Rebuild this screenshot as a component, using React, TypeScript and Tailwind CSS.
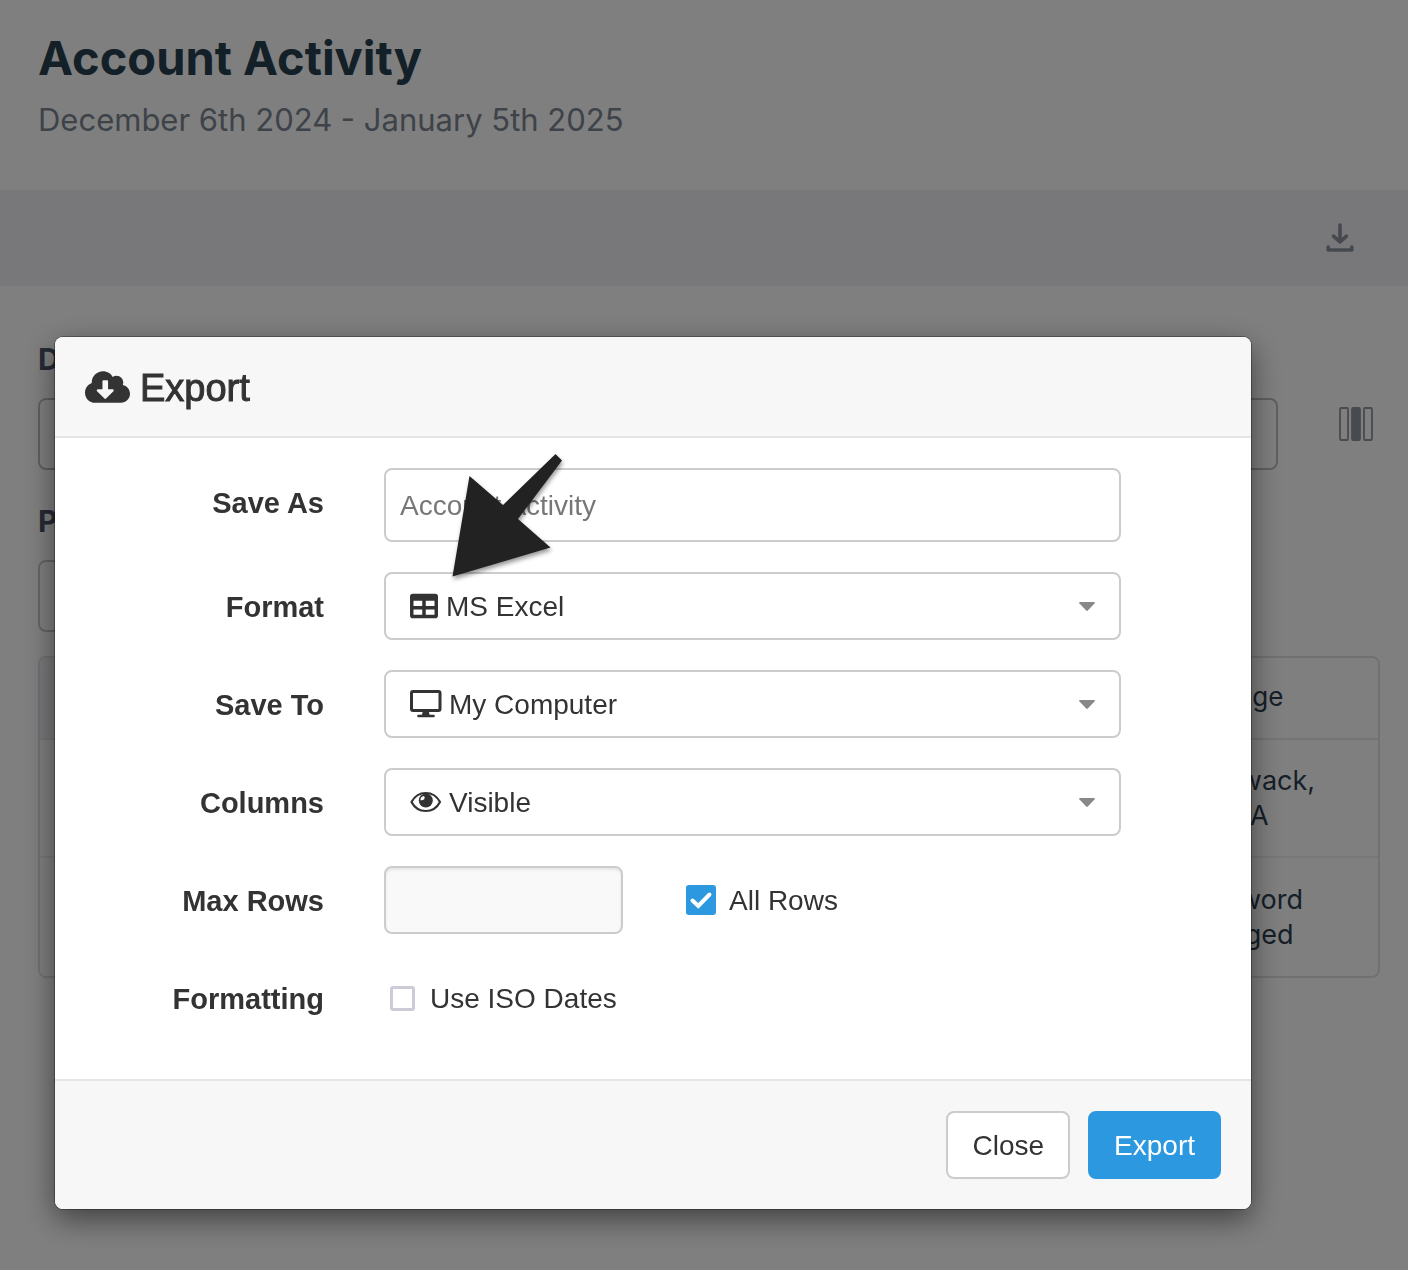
import { useState, type ReactNode } from "react";
import { FaCloudDownloadAlt, FaTable } from "react-icons/fa";

function DesktopIcon() {
  return (
    <svg viewBox="0 0 32 28" className="h-7 w-8" fill="none" stroke="currentColor" aria-hidden="true">
      <rect x="1.500" y="1.500" width="28.500" height="19" rx="1.500" strokeWidth="3" />
      <path d="M12.800 21h6l.8 4h-7.600z" fill="currentColor" stroke="none" />
      <path d="M8.500 26h15" strokeWidth="2.600" strokeLinecap="round" />
    </svg>
  );
}

function EyeIcon() {
  return (
    <svg viewBox="0 0 32 22" className="h-[22px] w-8" fill="none" aria-hidden="true">
      <path
        d="M1.500 11C4.500 5.300 9.700 2 15.800 2s11.200 3.300 14.200 9c-3 5.700-8.100 9-14.200 9S4.500 16.700 1.500 11z"
        stroke="currentColor"
        strokeWidth="2.200"
        strokeLinejoin="round"
      />
      <circle cx="15.800" cy="9.500" r="7" fill="currentColor" />
      <path d="M10.400 9.200a4.200 4.200 0 0 1 3.600-4.200q1.400 1.800.2 3.300-1.300 1.400-3.800.9z" fill="white" />
    </svg>
  );
}

function DownloadIcon() {
  return (
    <svg
      viewBox="0 0 28 30"
      className="h-[30px] w-7"
      fill="none"
      stroke="currentColor"
      strokeWidth="3.600"
      strokeLinecap="round"
      strokeLinejoin="round"
      aria-hidden="true"
    >
      <path d="M14 2V18M7.500 13.200l6.500 5.600 6.500-5.600" />
      <path d="M2.200 24v3h23.600v-3" />
    </svg>
  );
}

function ColumnsIcon() {
  return (
    <svg viewBox="0 0 34 34" className="size-[34px]" stroke="currentColor" strokeWidth="1.800" aria-hidden="true">
      <rect x="1" y="1" width="8" height="32" rx="1" fill="none" />
      <rect x="13" y="1" width="8" height="32" rx="1" fill="currentColor" />
      <rect x="25" y="1" width="8" height="32" rx="1" fill="none" />
    </svg>
  );
}

function Row({ label, htmlFor, children }: { label: string; htmlFor: string; children: ReactNode }) {
  return (
    <div className="grid grid-cols-12">
      <label
        htmlFor={htmlFor}
        className="col-span-3 flex h-[68px] items-center justify-end px-[30px] pt-0.5 text-[29px] font-bold"
      >
        {label}
      </label>
      {children}
    </div>
  );
}

function SelectRow({
  label,
  id,
  icon,
  options,
  indent,
}: {
  label: string;
  id: string;
  icon: ReactNode;
  options: string[];
  indent: string;
}) {
  return (
    <Row label={label} htmlFor={id}>
      <div className="col-span-8 px-[30px]">
        <div className="relative">
          <select
            id={id}
            className={`h-[68px] w-full appearance-none rounded-lg border-2 border-[#cccccc] bg-white pt-0.5 pr-16 ${indent}`}
          >
            {options.map((o) => (
              <option key={o}>{o}</option>
            ))}
          </select>
          <span className="pointer-events-none absolute inset-y-0 left-[26px] flex items-center">{icon}</span>
          <svg
            viewBox="0 0 16 9"
            className="pointer-events-none absolute top-[30px] right-[26px] h-[9px] w-4"
            fill="#888888"
            aria-hidden="true"
          >
            <path d="M1 0h14q1.500.400.500 1.500L8.800 8.600q-.800.700-1.600 0L.500 1.500Q-.500.400 1 0z" />
          </svg>
        </div>
      </div>
    </Row>
  );
}

function ReportPage() {
  return (
    <main className="min-h-screen bg-white font-['Inter',sans-serif] text-[#2c3e50]">
      <header className="h-[190px] px-[38px] pt-7">
        <h1 className="text-[47px] leading-[60px] font-bold text-[#28404f]">Account Activity</h1>
        <p className="mt-3 text-[31px] leading-[40px] text-[#7d8592]">December 6th 2024 - January 5th 2025</p>
      </header>
      <div className="flex h-24 items-center justify-end bg-[#f1f1f6] pr-[54px] text-[#8b929e]">
        <button type="button" aria-label="Download">
          <DownloadIcon />
        </button>
      </div>
      <section className="px-[38px] pt-[52px] text-[28px] leading-[35px]">
        <div className="flex items-start">
          <div className="flex-1">
            <label htmlFor="dates" className="block h-[60px] pt-1 text-[30px] font-bold text-[#4c5568]">
              Day
            </label>
            <input id="dates" className="block h-[72px] w-full rounded-lg border-2 border-[#bcbfc4] px-4" />
          </div>
          <button type="button" aria-label="Choose columns" className="mt-[69px] mr-[-3px] ml-[61px] text-[#8e96a0]">
            <ColumnsIcon />
          </button>
        </div>
        <label htmlFor="page" className="mt-[30px] block h-[60px] pt-1 text-[30px] font-bold text-[#4c5568]">
          Page
        </label>
        <input id="page" className="block h-[72px] w-1/2 rounded-lg border-2 border-[#c8cace] px-4" />
        <div className="mt-6 mr-[-10px] rounded-lg border-2 border-[#e2e2e4]">
          <table className="w-full table-fixed text-left">
            <colgroup>
              <col />
              <col className="w-[222px]" />
            </colgroup>
            <thead>
              <tr className="h-[81px] border-b-2 border-[#e8e8ec] text-[26px]">
                <th className="rounded-tl-lg bg-[#f1f1f6]" aria-label="Date" />
                <th className="pb-1 pl-8 font-normal">Change</th>
              </tr>
            </thead>
            <tbody className="text-[27px]">
              <tr className="h-[118px] border-b-2 border-[#eeeeee]">
                <td />
                <td className="pl-[22px]">
                  Chilliwack,
                  <br />
                  BC, CA
                </td>
              </tr>
              <tr className="h-[119px]">
                <td />
                <td className="pl-[22px]">
                  Password
                  <br />
                  Changed
                </td>
              </tr>
            </tbody>
          </table>
        </div>
      </section>
    </main>
  );
}

function ExportDialog() {
  const [allRows, setAllRows] = useState(true);
  const [isoDates, setIsoDates] = useState(false);

  return (
    <div
      role="dialog"
      aria-labelledby="export-title"
      className="relative rounded-lg bg-white font-['Liberation_Sans',Arial,sans-serif] text-[28px] leading-[40px] text-[#333333] shadow-[0_0_0_1px_rgba(0,0,0,0.300),0_10px_30px_rgba(0,0,0,0.500)]"
    >
      <div className="flex h-[101px] items-center gap-[10px] rounded-t-lg border-b-2 border-[#e5e5e5] bg-[#f7f7f7] px-[30px]">
        <FaCloudDownloadAlt className="h-9 w-[45px]" preserveAspectRatio="none" />
        <h2 id="export-title" className="pt-0.5 text-[38px] leading-[40px] [-webkit-text-stroke:1px_#333333]">
          Export
        </h2>
      </div>

      <form className="flex flex-col gap-[30px] pt-[30px] pb-[47px]">
        <Row label="Save As" htmlFor="save-as">
          <div className="col-span-8 px-[30px]">
            <input
              id="save-as"
              placeholder="Account Activity"
              className="block h-[74px] w-full rounded-lg border-2 border-[#cccccc] px-[14px] pt-0.5 placeholder:text-[#777777]"
            />
          </div>
        </Row>
        <SelectRow
          label="Format"
          id="format"
          icon={<FaTable className="size-7" />}
          options={["MS Excel", "CSV"]}
          indent="pl-[60px]"
        />
        <SelectRow
          label="Save To"
          id="save-to"
          icon={<DesktopIcon />}
          options={["My Computer"]}
          indent="pl-[63px]"
        />
        <SelectRow
          label="Columns"
          id="columns"
          icon={<EyeIcon />}
          options={["Visible", "All"]}
          indent="pl-[63px]"
        />
        <Row label="Max Rows" htmlFor="max-rows">
          <div className="col-span-3 px-[30px]">
            <input
              id="max-rows"
              disabled={allRows}
              className="block h-[68px] w-full rounded-lg border-2 border-[#cccccc] bg-[#f9f9f9] px-[14px] shadow-[inset_0_2px_3px_rgba(0,0,0,0.080)]"
            />
          </div>
          <label className="col-span-5 flex h-[68px] items-center gap-[13px] pl-[33px]">
            <span className="relative size-[30px]">
              <input
                type="checkbox"
                checked={allRows}
                onChange={(e) => setAllRows(e.target.checked)}
                className="block size-[30px] appearance-none rounded-[3px] border-[3px] border-[#ccccd8] bg-white checked:border-[#2b98e0] checked:bg-[#2b98e0]"
              />
              {allRows && (
                <svg
                  viewBox="0 0 30 30"
                  className="pointer-events-none absolute inset-0 size-[30px]"
                  fill="none"
                  stroke="white"
                  strokeWidth="4"
                  strokeLinecap="round"
                  aria-hidden="true"
                >
                  <path d="M6.500 15.500l5.800 5.500L23.500 9.500" />
                </svg>
              )}
            </span>
            <span className="pt-0.5">All Rows</span>
          </label>
        </Row>
        <Row label="Formatting" htmlFor="iso-dates">
          <div className="col-span-8 flex h-[68px] items-center gap-[15px] pl-9">
            <input
              id="iso-dates"
              type="checkbox"
              checked={isoDates}
              onChange={(e) => setIsoDates(e.target.checked)}
              className="size-[25px] appearance-none rounded-[3px] border-[3px] border-[#ccccd8] bg-white checked:border-[#2b98e0] checked:bg-[#2b98e0]"
            />
            <label htmlFor="iso-dates" className="pt-0.5">
              Use ISO Dates
            </label>
          </div>
        </Row>
      </form>

      <div className="flex justify-end gap-[18px] rounded-b-lg border-t-2 border-[#e5e5e5] bg-[#f7f7f7] p-[30px]">
        <button type="button" className="h-[68px] rounded-lg border-2 border-[#cccccc] bg-white px-6 pt-0.5">
          Close
        </button>
        <button
          type="button"
          className="h-[68px] rounded-lg border-2 border-[#2b98e0] bg-[#2b98e0] px-6 pt-0.5 text-white"
        >
          Export
        </button>
      </div>

      {/* Pointer to the format field */}
      <svg
        viewBox="0 0 120 130"
        className="pointer-events-none absolute top-[113px] left-[393px] h-[130px] w-[120px] drop-shadow-[1px_3px_2px_rgba(0,0,0,0.400)]"
        fill="#222222"
        aria-hidden="true"
      >
        <path d="M107.500 4L114 10.500 70 69l32.500 28.500L4.500 126.500 21.500 26 55 55z" />
      </svg>
    </div>
  );
}

export default function App() {
  return (
    <>
      <ReportPage />
      <div className="fixed inset-0 overflow-hidden bg-black/50 pt-[337px] pr-[157px] pl-[55px]">
        <ExportDialog />
      </div>
    </>
  );
}
